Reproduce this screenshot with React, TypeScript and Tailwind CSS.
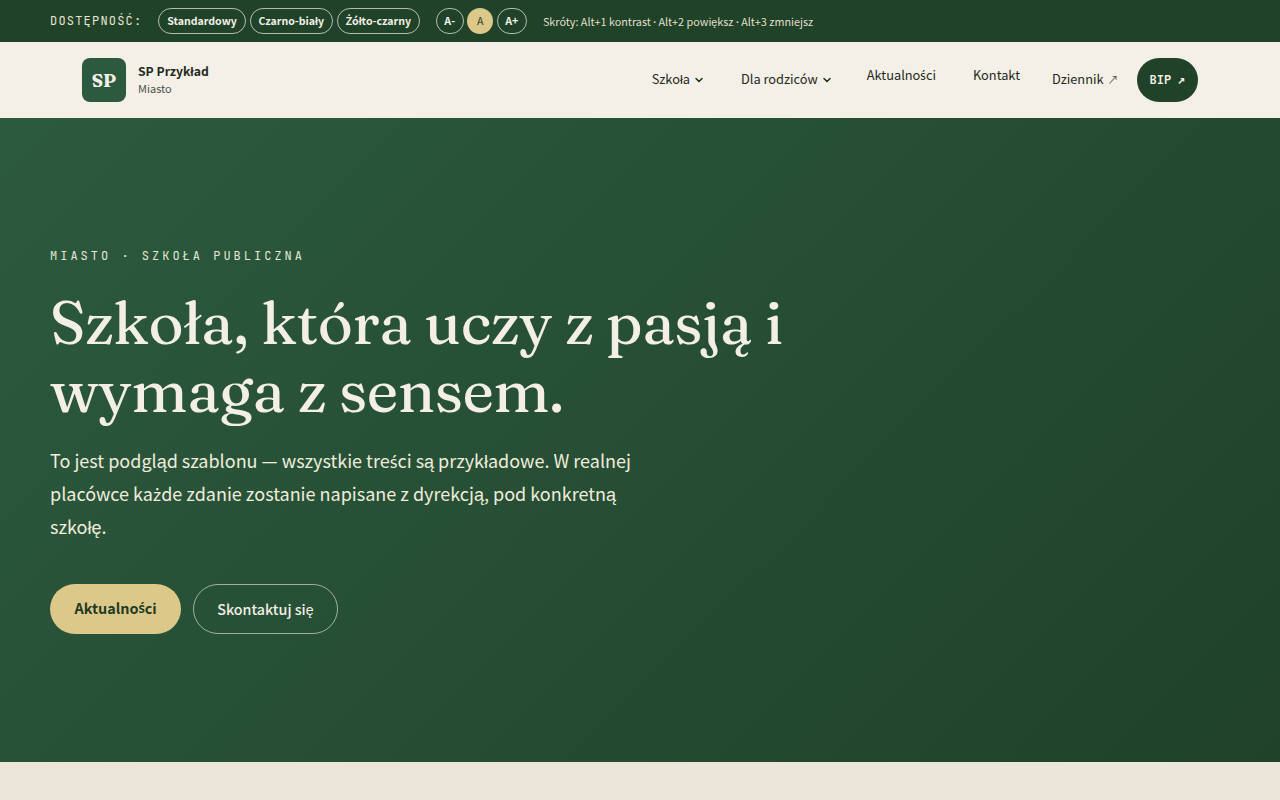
import { ChevronDown } from "lucide-react"

// Noto Sans CJK has no precomposed ś, ż, Ż or narrow middle dot, so they borrow Lato
function Pl({ c }: { c: string }) {
  return <span className="font-['Lato',sans-serif] leading-none">{c}</span>
}

function Pill({ children }: { children: React.ReactNode }) {
  return (
    <button className="h-[26px] rounded-full border border-[#f4efe6]/70 px-[7.75px] text-[10.6px] font-bold leading-none text-[#f4efe6]">
      {children}
    </button>
  )
}

function SizeBtn({ label, active }: { label: string; active?: boolean }) {
  return (
    <button
      className={
        active
          ? "h-[26px] min-w-[26px] rounded-full bg-[#dcc98a] px-2 text-[10.7px] leading-none text-[#1f4229]"
          : "h-[26px] min-w-[28px] rounded-full border border-[#f4efe6]/70 px-[7.5px] text-[10.7px] font-bold leading-none text-[#f4efe6]"
      }
    >
      {label}
    </button>
  )
}

export default function App() {
  return (
    <div className="h-[800px] overflow-hidden bg-[#ebe6d7] font-['Noto_Sans_CJK_SC',sans-serif]">
      {/* Top bar */}
      <div className="flex h-[42px] items-center bg-[#1f4229] px-[50px]">
        <span className="mr-4 font-['JetBrains_Mono',monospace] text-[12px] tracking-[0.1em] text-[#e9e3d0]">
          DOSTĘPNOŚĆ:
        </span>
        <div className="flex gap-1">
          <Pill>Standardowy</Pill>
          <Pill>Czarno-biały</Pill>
          <Pill>
            <Pl c="Ż" />ółto-czarny
          </Pill>
        </div>
        <div className="ml-4 flex gap-[3.5px]">
          <SizeBtn label="A-" />
          <SizeBtn label="A" active />
          <SizeBtn label="A+" />
        </div>
        <span className="ml-4 text-[10.8px] text-[#e3dfca]">
          Skróty: Alt+1 kontrast <Pl c="·" /> Alt+2 powiększ <Pl c="·" /> Alt+3 zmniejsz
        </span>
      </div>

      {/* Nav */}
      <nav className="h-[76px] bg-[#f4f0e7]">
        <div className="mx-auto flex h-full w-[1116px] items-center justify-between">
          <div className="flex items-center gap-3">
            <div className="flex h-11 w-11 items-center justify-center rounded-[8px] bg-[#2c5a3f] font-['Fraunces',serif] text-[18px] font-bold text-[#f4efe6]">
              SP
            </div>
            <div>
              <div className="text-[12.2px] font-bold leading-[17px] text-[#1f2a22]">SP Przykład</div>
              <div className="text-[11px] leading-[17px] text-[#4a524b]">Miasto</div>
            </div>
          </div>
          <div className="flex items-center text-[12.8px] text-[#1f2a22]">
            <a className="flex items-center gap-[3px] pb-[2px]">
              Szkoła <ChevronDown size={12} strokeWidth={3} className="mt-[2px]" />
            </a>
            <a className="ml-9 flex items-center gap-[3px] pb-[2px]">
              Dla rodziców <ChevronDown size={12} strokeWidth={3} className="mt-[2px]" />
            </a>
            <a className="ml-[34px] pb-[10px]">
              Aktualno<Pl c="ś" />ci
            </a>
            <a className="ml-[37px] pb-[10px]">Kontakt</a>
            <a className="ml-8 flex items-center gap-1 pb-[2px]">
              Dziennik <span className="text-[11px] text-[#4a524b]">↗</span>
            </a>
            <a className="ml-[18px] flex h-11 items-center rounded-full bg-[#1f4229] px-[13px] font-['JetBrains_Mono',monospace] text-[12px] font-bold text-[#f4efe6]">
              BIP <span className="ml-[6px] font-['DejaVu_Sans_Mono',monospace] text-[13px]">↗</span>
            </a>
          </div>
        </div>
      </nav>

      {/* Hero */}
      <section className="flex h-[644px] flex-col justify-center bg-[linear-gradient(135deg,#2c5a3f,#1f4229)] px-[50px] pt-[2px]">
        <div className="font-['JetBrains_Mono',monospace] text-[12px] leading-[16px] tracking-[0.25em] text-[#e2e6d4]">
          MIASTO · SZKOŁA PUBLICZNA
        </div>
        <h1 className="mt-6 font-['Fraunces',serif] text-[60px] font-normal leading-[68px] tracking-[-0.008em] text-[#f4efe6] [font-variation-settings:'opsz'_144]">
          Szkoła, która uczy z pasją i
          <br />
          wymaga z sensem.
        </h1>
        <p className="mt-5 w-[620px] text-[18px] leading-[33px] text-[#f0ecdc]">
          To jest podgląd szablonu — wszystkie tre<Pl c="ś" />ci są przykładowe. W realnej placówce ka<Pl c="ż" />de zdanie zostanie napisane z dyrekcją, pod konkretną szkołę.
        </p>
        <div className="mt-[41px] flex gap-3">
          <a className="flex h-[50px] items-center rounded-full bg-[#dcc98a] px-[24.5px] pb-[2px] text-[14.4px] font-bold text-[#1f3a25]">
            Aktualno<Pl c="ś" />ci
          </a>
          <a className="flex h-[50px] items-center rounded-full border border-[#f4efe6]/60 px-[23px] text-[14.3px] font-medium text-[#f4efe6]">
            Skontaktuj się
          </a>
        </div>
      </section>
    </div>
  )
}
